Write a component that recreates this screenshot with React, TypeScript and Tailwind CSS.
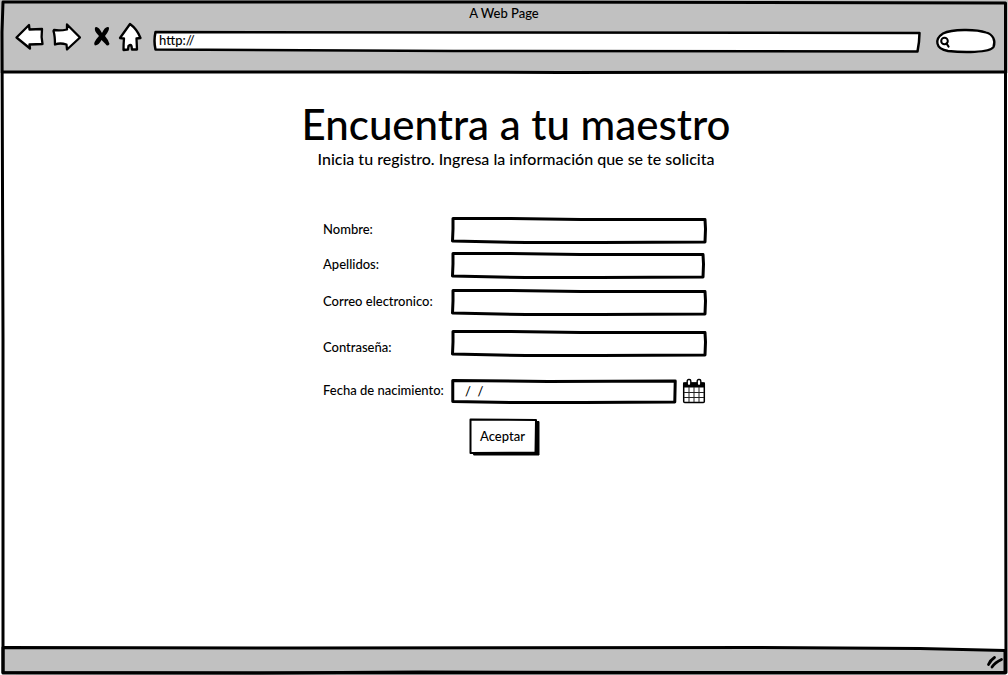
import type { InputHTMLAttributes } from "react";

const stroke = {
  stroke: "#000",
  strokeLinejoin: "round" as const,
  strokeLinecap: "round" as const,
};

function Outline({ d, viewBox, width = 2 }: { d: string; viewBox: string; width?: number }) {
  return (
    <svg
      className="pointer-events-none absolute inset-0 size-full overflow-visible"
      viewBox={viewBox}
      preserveAspectRatio="none"
      fill="none"
      aria-hidden="true"
    >
      <path d={d} {...stroke} strokeWidth={width} vectorEffect="non-scaling-stroke" />
    </svg>
  );
}

const boxPath =
  "M2 1.5 L60 1.5 L130 2.5 L254 2.5 L254.5 12 L254 25 L150 25.5 L75 25.5 L1.5 24 L2 12 Z";

type FieldProps = InputHTMLAttributes<HTMLInputElement> & {
  label: string;
  labelClass?: string;
  rowClass?: string;
  boxClass?: string;
};

function Field({ label, id, labelClass = "pb-0.5", rowClass = "", boxClass = "w-64", ...rest }: FieldProps) {
  return (
    <div className={`flex items-center ${rowClass}`}>
      <label htmlFor={id} className={`w-32 shrink-0 whitespace-nowrap ${labelClass}`}>
        {label}
      </label>
      <div className={`relative h-[26px] ${boxClass}`}>
        <input id={id} className="size-full bg-transparent px-3 outline-none" {...rest} />
        <Outline d={boxPath} viewBox="0 0 256 26" width={3} />
      </div>
    </div>
  );
}

function CalendarIcon() {
  return (
    <svg viewBox="0 0 24 26" className="h-[26px] w-6" aria-hidden="true">
      <rect x="1.700" y="5" width="20.600" height="19.500" rx="1" fill="#fff" stroke="#000" strokeWidth="1.500" />
      <path d="M1 4.500h22v5H1z" />
      <path d="M2 14.500h20M2 19.500h20M7 9v15M12 9v15M17 9v15" stroke="#222" strokeWidth="1" />
      <rect x="5.200" y="1.500" width="3.600" height="6" rx="1.500" fill="#fff" stroke="#000" strokeWidth="1.400" />
      <rect x="15.200" y="1.500" width="3.600" height="6" rx="1.500" fill="#fff" stroke="#000" strokeWidth="1.400" />
    </svg>
  );
}

export default function App() {
  return (
    <div className="relative flex min-h-screen flex-col bg-white font-['Lato',sans-serif] text-[13px] leading-[18px] font-medium text-black">
      <header className="relative flex h-[73px] flex-col bg-[#c1c1c1] pt-1">
        <div className="text-center">A Web Page</div>
        <nav className="flex items-start pl-[15px] pr-[13px]" aria-label="Browser">
          <div className="flex items-center gap-2">
            <button type="button" aria-label="Back">
              <svg viewBox="0 0 28 30" className="h-[30px] w-7 overflow-visible" fill="#fff" {...stroke} strokeWidth="2.300">
                <path d="M1.500 15.500 L14 3 L14.500 7.500 L27 7 Q26 15 27.500 22 L14.500 22.500 L15 26.500 Z" />
              </svg>
            </button>
            <button type="button" aria-label="Forward">
              <svg viewBox="0 0 30 30" className="h-[30px] w-[30px]" fill="#fff" {...stroke} strokeWidth="2.300">
                <path d="M3 8 Q9 9 16 7.500 L16 2.500 L29 15.500 L16 27.500 L15.500 22.500 Q9 20.500 4 22.500 Q4 14 2.500 9 Z" />
              </svg>
            </button>
            <button type="button" aria-label="Stop">
              <svg viewBox="0 0 22 30" className="h-[30px] w-[22px] overflow-visible">
                <path d="M6.500 5 Q9.500 4 13 11 Q16 4 19.500 5 Q21.500 7 16 14 Q19.500 18 20.500 22 Q18.500 25 16.500 22 L12.500 18 Q10 23 6 23.500 Q3 21.500 10 14 Q4 8 6.500 5 Z" />
              </svg>
            </button>
            <button type="button" aria-label="Home">
              <svg viewBox="0 0 22 30" className="h-[30px] w-[22px] overflow-visible" fill="#fff" {...stroke} strokeWidth="2.300">
                <path d="M11 2 L1 16 L5 16.500 Q4.500 22 4.500 28 L9 27.500 L9.500 24 Q12 22 12.500 24 L13 27.500 L18 27.500 L17.500 16.500 L21.500 16 Q18 7 11 2 Z" />
              </svg>
            </button>
          </div>
          <div className="relative mt-[9px] ml-3 h-[21px] flex-1">
            <svg className="absolute inset-0 size-full overflow-visible" viewBox="0 0 766 21" preserveAspectRatio="none" aria-hidden="true">
              <path
                d="M2.500 1 L330 1.500 L765.500 2 Q765.500 10 763.500 20.500 L300 20 L2.500 18.500 Q0.500 10 2.500 1 Z"
                fill="#fff"
                {...stroke}
                strokeWidth="2.500"
                vectorEffect="non-scaling-stroke"
              />
            </svg>
            <input
              type="text"
              aria-label="Address"
              defaultValue="http://"
              className="relative block h-[18px] w-full bg-transparent px-1.5 outline-none"
            />
          </div>
          <div className="relative mt-[7px] ml-4 h-6 w-[59px]">
            <svg className="absolute inset-0 size-full overflow-visible" viewBox="0 0 59 24" fill="none" {...stroke} aria-hidden="true">
              <path
                d="M7 4.500 C16 0 40 0 50 3.500 C57 5 60 12 57.500 18 C54 24 26 23.500 12 22 C-1 20 -1.500 10 7 4.500 Z"
                fill="#fff"
                strokeWidth="2.300"
              />
              <circle cx="8.500" cy="12" r="3.300" strokeWidth="2" />
              <path d="M10.500 14.500 L12.500 17.500" strokeWidth="2.200" />
            </svg>
            <input type="search" aria-label="Search" className="relative block size-full bg-transparent pl-5 pr-2 outline-none" />
          </div>
        </nav>
        <Outline d="M3 72 L400 72 L560 72.500 L1005 72" viewBox="0 0 1008 73" width={3} />
      </header>

      <main className="flex flex-1 flex-col items-center pt-7 pb-8 pl-6">
        <h1 className="text-[42px] leading-[46px] font-medium">Encuentra a tu maestro</h1>
        <p className="mt-0.5 text-[16px] leading-5">Inicia tu registro. Ingresa la información que se te solicita</p>

        <form className="mt-12 w-[386px]" onSubmit={(e) => e.preventDefault()}>
          <Field id="nombre" label="Nombre:" type="text" />
          <Field id="apellidos" label="Apellidos:" type="text" rowClass="mt-[9px]" boxClass="w-[254px]" />
          <Field id="correo" label="Correo electronico:" type="email" rowClass="mt-[11px]" />
          <Field id="contrasena" label="Contraseña:" type="password" rowClass="mt-[15px]" labelClass="pt-2" />
          <div className="mt-[22px] flex items-center">
            <label htmlFor="fecha" className="w-32 shrink-0 pb-0.5 whitespace-nowrap">
              Fecha de nacimiento:
            </label>
            <div className="relative h-[26px] w-[226px]">
              <input id="fecha" type="text" defaultValue="/  /" className="size-full bg-transparent px-3.5 outline-none" />
              <Outline d="M2 2.500 L110 3.500 L254 3 L253.500 24 L150 24.500 L70 24.500 L2 23.500 Z" viewBox="0 0 256 26" width={3} />
            </div>
            <button type="button" aria-label="Abrir calendario" className="ml-[5px]">
              <CalendarIcon />
            </button>
          </div>
          <button type="submit" className="relative mt-3.5 ml-[146px] h-[38px] w-[71px] pr-1 pb-0.5">
            <svg className="absolute inset-0 size-full" viewBox="0 0 71 38" {...stroke} aria-hidden="true">
              <path d="M5 4 L70 3.500 L70 37 L5 37 Z" strokeWidth="1" />
              <path d="M1.500 1.500 L67 2 L66.500 34.500 L1.500 35 Z" fill="#fff" strokeWidth="2" />
            </svg>
            <span className="relative">Aceptar</span>
          </button>
        </form>
      </main>

      <footer className="relative flex h-[29px] items-center justify-end pr-1">
        <svg className="absolute inset-0 size-full" viewBox="0 0 1008 29" preserveAspectRatio="none" aria-hidden="true">
          <path
            d="M3 1.500 L300 2 L760 1.500 L920 2.500 L1005 4.500 L1005 27 L3 27 Z"
            fill="#c1c1c1"
            {...stroke}
            strokeWidth="3"
            vectorEffect="non-scaling-stroke"
          />
        </svg>
        <svg viewBox="0 0 18 14" className="relative mt-0.5 h-3.5 w-[18px]" aria-hidden="true">
          <path d="M2.500 9.500 Q4.500 5 8.500 2.500M6 12 Q9 7.500 15.500 4.500" fill="none" {...stroke} strokeWidth="2.800" />
        </svg>
      </footer>

      <Outline
        d="M3 2 L500 2 L1005.500 3 L1005.500 340 L1006 672.500 L700 672.500 L420 672 L260 673 L3 672.500 L3 340 L2 32 Z"
        viewBox="0 0 1008 675"
        width={3}
      />
    </div>
  );
}
